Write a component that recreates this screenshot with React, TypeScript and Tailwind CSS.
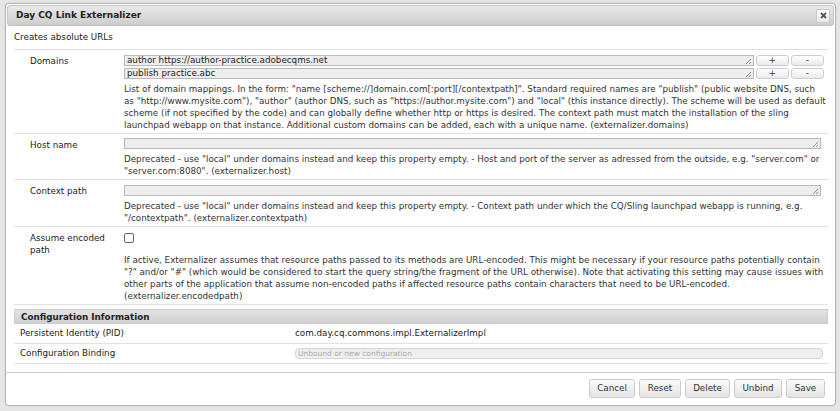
import React from "react";

const font = "font-['Verdana','DejaVu_Sans',sans-serif]";

function Field({ value, className = "" }: { value?: string; className?: string }) {
  return (
    <div
      className={`relative h-[11px] border border-[#b9b9b9] bg-[#ededed] text-[8.75px] leading-[9px] text-[#222] pl-[2px] overflow-hidden ${className}`}
    >
      {value}
      <svg className="absolute right-[1px] bottom-0" width="7" height="7" viewBox="0 0 7 7">
        <path d="M6 1L1 6M6 4L4 6" stroke="#777" strokeWidth="0.8" />
      </svg>
    </div>
  );
}

function SmallBtn({ label }: { label: string }) {
  return (
    <div className="w-[33px] h-[11px] rounded-[3px] border border-[#cfcfcf] bg-gradient-to-b from-white to-[#eaeaea] text-[9px] leading-[9px] text-center text-[#444]">
      {label}
    </div>
  );
}

function Row({
  label,
  children,
  lines,
}: {
  label: React.ReactNode;
  children: React.ReactNode;
  lines: string[];
}) {
  return (
    <div className="grid grid-cols-[110px_1fr] border-b border-[#e2e2e2] pt-[4px] pb-[2px]">
      <div className="pl-[16px] pt-[1px] text-[8.75px] leading-[12px] text-[#222]">{label}</div>
      <div className="pr-[7px]">
        {children}
        <div className="mt-[4px] text-[8.75px] leading-[12px] text-[#333]">
          {lines.map((l, i) => (
            <div key={i} className="whitespace-nowrap">
              {l}
            </div>
          ))}
        </div>
      </div>
    </div>
  );
}

const footer = [
  { label: "Cancel", w: "w-[46px]" },
  { label: "Reset", w: "w-[42px]" },
  { label: "Delete", w: "w-[45px]" },
  { label: "Unbind", w: "w-[48px]" },
  { label: "Save", w: "w-[39px]" },
];

export default function App() {
  return (
    <div className={`relative w-[840px] h-[411px] overflow-hidden bg-[#e6e6e6] ${font}`}>
      <div className="absolute left-[5px] top-[3px] w-[831px] h-[403px] rounded-[4px] border border-[#b5b5b5] bg-white flex flex-col shadow-[0_0_2px_rgba(0,0,0,0.15)]">
        {/* title */}
        <div className="mx-[1px] mt-[1px] h-[21px] rounded-[3px] border border-[#c4c4c4] bg-gradient-to-b from-[#e9e9e9] to-[#cdcdcd] flex items-center justify-between pl-[8px] pr-[3px]">
          <span className="text-[9px] font-bold text-[#222]">Day CQ Link Externalizer</span>
          <div className="w-[14px] h-[14px] rounded-[2px] border border-[#c9c9c9] bg-gradient-to-b from-white to-[#e8e8e8] flex items-center justify-center">
            <svg width="7" height="7" viewBox="0 0 7 7">
              <path d="M1 1L6 6M6 1L1 6" stroke="#555" strokeWidth="1.8" />
            </svg>
          </div>
        </div>

        <div className="pl-[8px] pr-[7px] flex-1 flex flex-col">
          <div className="pt-[5px] pb-[6px] text-[8.75px] leading-[12px] text-[#222] border-b border-[#dedede]">
            Creates absolute URLs
          </div>

          <Row
            label="Domains"
            lines={[
              `List of domain mappings. In the form: "name [scheme://]domain.com[:port][/contextpath]". Standard required names are "publish" (public website DNS, such`,
              `as "http://www.mysite.com"), "author" (author DNS, such as "https://author.mysite.com") and "local" (this instance directly). The scheme will be used as default`,
              `scheme (if not specified by the code) and can globally define whether http or https is desired. The context path must match the installation of the sling`,
              `launchpad webapp on that instance. Additional custom domains can be added, each with a unique name. (externalizer.domains)`,
            ]}
          >
            <div className="flex flex-col gap-[2px] pt-[1px] pr-[2px]">
              <div className="flex items-center gap-[2px]">
                <Field value="author https://author-practice.adobecqms.net" className="flex-1" />
                <SmallBtn label="+" />
                <SmallBtn label="-" />
              </div>
              <div className="flex items-center gap-[2px]">
                <Field value="publish practice.abc" className="flex-1" />
                <SmallBtn label="+" />
                <SmallBtn label="-" />
              </div>
            </div>
          </Row>

          <Row
            label="Host name"
            lines={[
              `Deprecated - use "local" under domains instead and keep this property empty. - Host and port of the server as adressed from the outside, e.g. "server.com" or`,
              `"server.com:8080". (externalizer.host)`,
            ]}
          >
            <Field />
          </Row>

          <Row
            label="Context path"
            lines={[
              `Deprecated - use "local" under domains instead and keep this property empty. - Context path under which the CQ/Sling launchpad webapp is running, e.g.`,
              `"/contextpath". (externalizer.contextpath)`,
            ]}
          >
            <Field className="mt-[1px]" />
          </Row>

          <Row
            label={
              <>
                Assume encoded
                <br />
                path
              </>
            }
            lines={[
              `If active, Externalizer assumes that resource paths passed to its methods are URL-encoded. This might be necessary if your resource paths potentially contain`,
              `"?" and/or "#" (which would be considered to start the query string/the fragment of the URL otherwise). Note that activating this setting may cause issues with`,
              `other parts of the application that assume non-encoded paths if affected resource paths contain characters that need to be URL-encoded.`,
              `(externalizer.encodedpath)`,
            ]}
          >
            <div className="pt-[2px] h-[19px]">
              <div className="w-[10px] h-[10px] rounded-[2px] border border-[#666] bg-white" />
            </div>
          </Row>

          <div className="mt-[4px] h-[15px] bg-gradient-to-b from-[#e3e3e3] to-[#d0d0d0] border border-[#cccccc] pl-[6px] text-[8.75px] font-bold leading-[14px] text-[#222]">
            Configuration Information
          </div>
          <div className="grid grid-cols-[281px_1fr] h-[20px] items-center border-b border-[#e2e2e2] text-[8.75px] text-[#222]">
            <span className="pl-[6px]">Persistent Identity (PID)</span>
            <span>com.day.cq.commons.impl.ExternalizerImpl</span>
          </div>
          <div className="grid grid-cols-[281px_1fr] h-[20px] items-center border-b border-[#e2e2e2] text-[8.75px] text-[#222]">
            <span className="pl-[6px]">Configuration Binding</span>
            <div className="h-[11px] rounded-[4px] border border-[#d5d5d5] bg-[#efefef] text-[7.5px] leading-[9px] pl-[2px] text-[#aaa] mr-[5px]">
              Unbound or new configuration
            </div>
          </div>
        </div>

        <div className="mt-[8px] border-t border-[#d0d0d0] h-[33px] flex items-center justify-end gap-[4px] pr-[10px] pb-[2px]">
          {footer.map((b) => (
            <div
              key={b.label}
              className={`${b.w} h-[19px] text-center rounded-[3px] border border-[#cbcbcb] bg-gradient-to-b from-[#fbfbfb] to-[#e4e4e4] text-[8.75px] leading-[17px] text-[#333]`}
            >
              {b.label}
            </div>
          ))}
        </div>
      </div>
    </div>
  );
}
